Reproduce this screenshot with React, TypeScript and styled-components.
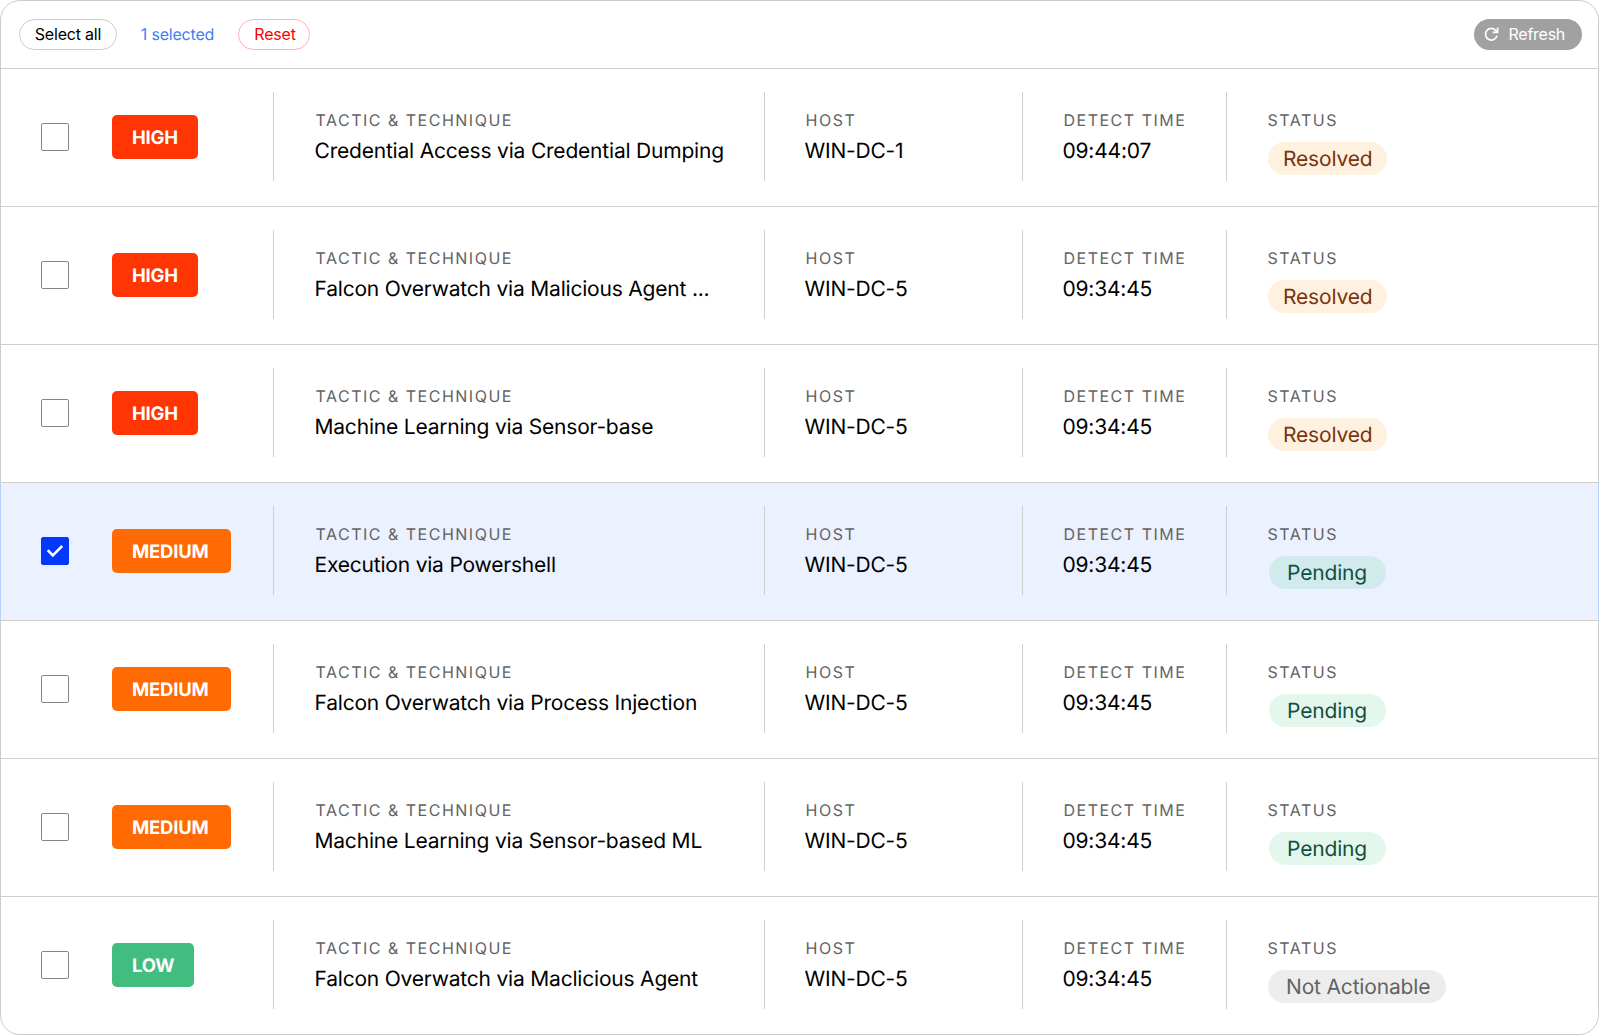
import React, { useState } from "react";
import styled, { createGlobalStyle } from "styled-components";

type Severity = "HIGH" | "MEDIUM" | "LOW";
type Status = "Resolved" | "Pending" | "Not Actionable";

interface Detection {
  id: number;
  severity: Severity;
  technique: string;
  host: string;
  time: string;
  status: Status;
}

const detections: Detection[] = [
  { id: 1, severity: "HIGH", technique: "Credential Access via Credential Dumping", host: "WIN-DC-1", time: "09:44:07", status: "Resolved" },
  { id: 2, severity: "HIGH", technique: "Falcon Overwatch via Malicious Agent ...", host: "WIN-DC-5", time: "09:34:45", status: "Resolved" },
  { id: 3, severity: "HIGH", technique: "Machine Learning via Sensor-base", host: "WIN-DC-5", time: "09:34:45", status: "Resolved" },
  { id: 4, severity: "MEDIUM", technique: "Execution via Powershell", host: "WIN-DC-5", time: "09:34:45", status: "Pending" },
  { id: 5, severity: "MEDIUM", technique: "Falcon Overwatch via Process Injection", host: "WIN-DC-5", time: "09:34:45", status: "Pending" },
  { id: 6, severity: "MEDIUM", technique: "Machine Learning via Sensor-based ML", host: "WIN-DC-5", time: "09:34:45", status: "Pending" },
  { id: 7, severity: "LOW", technique: "Falcon Overwatch via Maclicious Agent", host: "WIN-DC-5", time: "09:34:45", status: "Not Actionable" },
];

const severityStyle: Record<Severity, { color: string; width: number }> = {
  HIGH: { color: "#ff3503", width: 86 },
  MEDIUM: { color: "#ff6a03", width: 119 },
  LOW: { color: "#41bd7f", width: 82 },
};

const statusStyle: Record<Status, { bg: string; fg: string; width: number; indent: number; pad: number }> = {
  Resolved: { bg: "#fff1df", fg: "#7a330c", width: 119, indent: 0, pad: 15 },
  Pending: { bg: "rgba(25, 190, 95, 0.12)", fg: "#12503e", width: 117, indent: 1, pad: 18 },
  "Not Actionable": { bg: "#ededed", fg: "#636363", width: 178, indent: 0, pad: 18 },
};

const GlobalStyle = createGlobalStyle`
  *, *::before, *::after { box-sizing: border-box; }
  body {
    margin: 0;
    background: #fff;
    color: #000;
    font-family: Inter, "Liberation Sans", sans-serif;
    text-rendering: geometricPrecision;
  }
  button { font: inherit; cursor: pointer; }
`;

const Card = styled.main`
  width: 1599px;
  height: 1035px;
  border: 1px solid #cbcbcb;
  border-radius: 20px;
  background: #fff;
`;

const Toolbar = styled.header`
  display: flex;
  align-items: center;
  height: 67px;
  padding: 0 16px 0 18px;
`;

const PillButton = styled.button<{ $width: number; $color: string; $border: string; $shift?: number }>`
  width: ${(p) => p.$width}px;
  height: 31px;
  padding: 0 0 0 ${(p) => p.$shift ?? 0}px;
  border: 1px solid ${(p) => p.$border};
  border-radius: 16px;
  background: #fff;
  color: ${(p) => p.$color};
  font-size: 16px;
  letter-spacing: -0.2px;
  line-height: 29px;
  white-space: nowrap;
`;

const SelectedCount = styled.span`
  width: 121px;
  color: #3f80f6;
  font-size: 16px;
  letter-spacing: -0.2px;
  line-height: 31px;
  text-align: center;
`;

const RefreshButton = styled.button`
  display: flex;
  align-items: center;
  gap: 7.5px;
  width: 108px;
  height: 31px;
  margin-left: auto;
  padding: 0 0 0 8px;
  border: 0;
  border-radius: 16px;
  background: #a1a1a1;
  color: #fff;
  font-size: 16px;
  letter-spacing: -0.25px;
  line-height: 31px;
`;

const Row = styled.section<{ $selected: boolean }>`
  display: grid;
  grid-template-columns: 71px 161px 491px 258px 204px 1fr;
  align-items: center;
  height: 138px;
  margin: 0 -1px;
  padding: 0 1px 2px 41px;
  border-top: 1px solid #cfcfcf;
  background: ${(p) => (p.$selected ? "#ebf1fe" : "transparent")};
  box-shadow: ${(p) => (p.$selected ? "inset 1px 0 #b9d2fd, inset -1px 0 #b9d2fd" : "none")};
`;

const Checkbox = styled.button<{ $checked: boolean }>`
  display: flex;
  align-items: center;
  justify-content: center;
  width: 28px;
  height: 28px;
  padding: 0;
  border: 1px solid ${(p) => (p.$checked ? "#0038ff" : "#858585")};
  border-radius: 2px;
  background: ${(p) => (p.$checked ? "#0038ff" : "#fff")};
`;

const SeverityBadge = styled.span<{ $color: string; $width: number }>`
  width: ${(p) => p.$width}px;
  height: 44px;
  padding-left: 20px;
  border-radius: 5px;
  background: ${(p) => p.$color};
  color: #fff;
  font-size: 18.5px;
  letter-spacing: -0.2px;
  font-weight: 700;
  line-height: 46px;
`;

const Cell = styled.div<{ $inset?: number }>`
  height: 89px;
  padding: 18px 0 0 ${(p) => p.$inset ?? 39.5}px;
  border-left: 1px solid #cfcfcf;
  white-space: nowrap;
`;

const Label = styled.div`
  padding-left: 1px;
  color: #636363;
  font-size: 16px;
  line-height: 20px;
  letter-spacing: 1.5px;
`;

const Value = styled.div`
  margin-top: 8px;
  font-size: 21px;
  line-height: 28px;
  letter-spacing: -0.2px;
`;

const StatusPill = styled.div<{ $bg: string; $fg: string; $width: number; $indent: number; $pad: number }>`
  width: ${(p) => p.$width}px;
  height: 33px;
  margin: 12px 0 0 ${(p) => p.$indent + 1.5}px;
  padding-left: ${(p) => p.$pad}px;
  border-radius: 17px;
  background: ${(p) => p.$bg};
  color: ${(p) => p.$fg};
  font-size: 21px;
  letter-spacing: -0.17px;
  line-height: 36px;
`;

function CheckIcon() {
  return (
    <svg width="18" height="14" viewBox="0 0 18 14" fill="none" stroke="#fff" strokeWidth="2.6">
      <path d="M1.7 6.2 6.8 11.3 16.2 2" />
    </svg>
  );
}

function RefreshIcon() {
  return (
    <svg width="19" height="19" viewBox="0 0 19 19" fill="none" stroke="#fff" strokeWidth="1.7">
      <path d="M15 10.6A5.8 5.8 0 1 1 13.6 5.3L15.2 7.2M15.6 2.6V7.4H10.6" />
    </svg>
  );
}

export default function App() {
  const [selected, setSelected] = useState<number[]>([4]);
  const toggle = (id: number) =>
    setSelected((ids) => (ids.includes(id) ? ids.filter((x) => x !== id) : [...ids, id]));

  return (
    <>
      <GlobalStyle />
      <Card>
        <Toolbar>
          <PillButton $width={98} $color="#000" $border="#cbcbcb" onClick={() => setSelected(detections.map((d) => d.id))}>
            Select all
          </PillButton>
          <SelectedCount>{selected.length} selected</SelectedCount>
          <PillButton $width={72} $color="#ff0000" $border="#ffb0b0" $shift={2} onClick={() => setSelected([])}>
            Reset
          </PillButton>
          <RefreshButton>
            <RefreshIcon />
            Refresh
          </RefreshButton>
        </Toolbar>
        {detections.map((d) => {
          const checked = selected.includes(d.id);
          const severity = severityStyle[d.severity];
          const status = statusStyle[d.status];
          return (
            <Row key={d.id} $selected={checked}>
              <Checkbox $checked={checked} role="checkbox" aria-checked={checked} onClick={() => toggle(d.id)}>
                {checked && <CheckIcon />}
              </Checkbox>
              <SeverityBadge $color={severity.color} $width={severity.width}>
                {d.severity}
              </SeverityBadge>
              <Cell $inset={40.5}>
                <Label>TACTIC &amp; TECHNIQUE</Label>
                <Value>{d.technique}</Value>
              </Cell>
              <Cell>
                <Label>HOST</Label>
                <Value>{d.host}</Value>
              </Cell>
              <Cell>
                <Label>DETECT TIME</Label>
                <Value>{d.time}</Value>
              </Cell>
              <Cell>
                <Label>STATUS</Label>
                <StatusPill $bg={status.bg} $fg={status.fg} $width={status.width} $indent={status.indent} $pad={status.pad}>
                  {d.status}
                </StatusPill>
              </Cell>
            </Row>
          );
        })}
      </Card>
    </>
  );
}
